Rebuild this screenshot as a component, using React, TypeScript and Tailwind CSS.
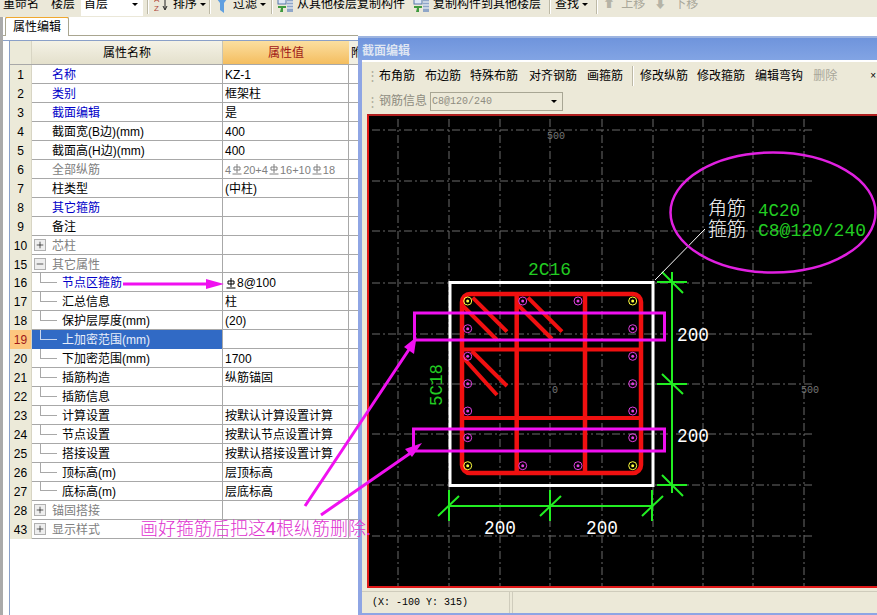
import React from 'react';
import { Plus, Minus } from 'lucide-react';

type Row = {
  no: string;
  name: string;
  value?: React.ReactNode;
  kind?: 'link' | 'muted' | 'child' | 'childLink' | 'group' | 'open' | 'last' | 'selected';
  muted?: boolean;
};

// steel grade mark used by the rebar values
const Bar: React.FC = () => (
  <svg viewBox="0 0 10 11" className="inline-block w-[10px] h-[11px] mx-[1px] align-[-1px]" fill="none" stroke="currentColor" strokeWidth="1">
    <path d="M5 0v9M2 6V3h6v3H2M0.500 10h9" />
  </svg>
);

const ROWS: Row[] = [
  { no: '1', name: '名称', value: 'KZ-1', kind: 'link' },
  { no: '2', name: '类别', value: '框架柱', kind: 'link' },
  { no: '3', name: '截面编辑', value: '是', kind: 'link' },
  { no: '4', name: '截面宽(B边)(mm)', value: '400' },
  { no: '5', name: '截面高(H边)(mm)', value: '400' },
  { no: '6', name: '全部纵筋', kind: 'muted', muted: true, value: <>4<Bar />20+4<Bar />16+10<Bar />18</> },
  { no: '7', name: '柱类型', value: '(中柱)' },
  { no: '8', name: '其它箍筋', kind: 'link' },
  { no: '9', name: '备注' },
  { no: '10', name: '芯柱', kind: 'group' },
  { no: '15', name: '其它属性', kind: 'open' },
  { no: '16', name: '节点区箍筋', kind: 'childLink', value: <><Bar />8@100</> },
  { no: '17', name: '汇总信息', kind: 'child', value: '柱' },
  { no: '18', name: '保护层厚度(mm)', kind: 'child', value: '(20)' },
  { no: '19', name: '上加密范围(mm)', kind: 'selected' },
  { no: '20', name: '下加密范围(mm)', kind: 'child', value: '1700' },
  { no: '21', name: '插筋构造', kind: 'child', value: '纵筋锚固' },
  { no: '22', name: '插筋信息', kind: 'child' },
  { no: '23', name: '计算设置', kind: 'child', value: '按默认计算设置计算' },
  { no: '24', name: '节点设置', kind: 'child', value: '按默认节点设置计算' },
  { no: '25', name: '搭接设置', kind: 'child', value: '按默认搭接设置计算' },
  { no: '26', name: '顶标高(m)', kind: 'child', value: '层顶标高' },
  { no: '27', name: '底标高(m)', kind: 'last', value: '层底标高' },
  { no: '28', name: '锚固搭接', kind: 'group' },
  { no: '43', name: '显示样式', kind: 'group' },
];

const Sep: React.FC<{ className?: string }> = ({ className }) => (
  <span className={`w-[2px] h-[20px] border-l border-[#bdb9a6] bg-white shrink-0 ${className ?? ''}`} />
);

const Caret: React.FC<{ className?: string }> = ({ className }) => (
  <span className={`w-0 h-0 border-x-[3px] border-t-[3px] border-x-transparent border-t-black shrink-0 ${className ?? ''}`} />
);

const CopyIcon: React.FC<{ className?: string }> = ({ className }) => (
  <svg viewBox="0 0 16 18" className={`w-[16px] h-[18px] shrink-0 ${className ?? ''}`}>
    <rect x="1" y="0" width="8" height="9" fill="#dfe7f5" stroke="#5577aa" />
    <rect x="10" y="1" width="6" height="16" fill="#8fa6c8" />
    <path d="M10 4h6M10 7h6M10 10h6M10 13h6" stroke="#fff" />
    <path d="M1 11h8v2h-3v4h-3l1-4h-3z" fill="#3f9a3f" />
  </svg>
);

const TopToolbar: React.FC = () => (
  <div className="h-[17px] bg-[#ebe8d9] overflow-hidden shrink-0">
    <div className="flex items-center h-[8px] text-[12px] text-black whitespace-nowrap">
      <span className="ml-[3px]">重命名</span>
      <span className="ml-[12px]">楼层</span>
      <span className="ml-[6px] w-[62px] h-[24px] bg-white flex items-center pl-[3px] justify-between pr-[5px]">首层<Caret /></span>
      <Sep className="ml-[4px]" />
      <svg viewBox="0 0 14 18" className="w-[14px] h-[18px] ml-[5px] shrink-0">
        <text x="0" y="7" fontSize="8" fill="#b04a3a">A</text>
        <text x="0" y="16" fontSize="8" fill="#b04a3a">Z</text>
        <path d="M11 2v12M9 11l2 4 2-4" stroke="#222" fill="none" />
      </svg>
      <span className="ml-[5px]">排序</span>
      <Caret className="ml-[3px]" />
      <Sep className="ml-[3px]" />
      <svg viewBox="0 0 16 18" className="w-[16px] h-[18px] ml-[3px] shrink-0">
        <path d="M0 0h16l-6 8v10l-4-3V8z" fill="#5f9fe0" />
      </svg>
      <span className="ml-[3px]">过滤</span>
      <Caret className="ml-[3px]" />
      <Sep className="ml-[5px]" />
      <CopyIcon className="ml-[4px]" />
      <span className="ml-[4px]">从其他楼层复制构件</span>
      <CopyIcon className="ml-[8px]" />
      <span className="ml-[4px]">复制构件到其他楼层</span>
      <Sep className="ml-[8px]" />
      <span className="ml-[4px]">查找</span>
      <Caret className="ml-[3px]" />
      <Sep className="ml-[8px]" />
      <span className="ml-[5px] text-[#b5b3a6]">⬆</span>
      <span className="ml-[6px] text-[#a9a799]">上移</span>
      <span className="ml-[9px] text-[#b5b3a6]">⬇</span>
      <span className="ml-[8px] text-[#a9a799]">下移</span>
    </div>
  </div>
);

const NameCell: React.FC<{ row: Row }> = ({ row }) => {
  const k = row.kind;
  const selected = k === 'selected';
  const inTree = k === 'child' || k === 'childLink' || k === 'last' || selected;
  const isGroup = k === 'group' || k === 'open';
  const color = selected
    ? 'text-[#e8eefa]'
    : k === 'link' || k === 'childLink'
      ? 'text-[#0000c8]'
      : k === 'muted' || isGroup
        ? 'text-[#808080]'
        : 'text-black';
  return (
    <div className={`flex items-center border-r border-[#a8a8a8] overflow-hidden whitespace-nowrap ${color} ${selected ? 'bg-[#316ac5]' : ''}`}>
      {inTree && (
        <div className={`ml-[8px] w-[22px] shrink-0 flex ${k === 'last' ? 'h-1/2 self-start' : 'h-full'}`}>
          <div className={`w-[17px] border-l ${selected ? 'border-[#c9d6ee]' : 'border-[#a8a8a8]'} ${k === 'last' ? 'h-full border-b' : 'h-1/2 border-b'}`} />
        </div>
      )}
      {isGroup && (
        <span className="ml-[2px] mr-[6px] w-[12px] h-[12px] border border-[#b0b0b0] bg-[#eeeeee] flex items-center justify-center text-black shrink-0">
          {k === 'open' ? <Minus size={10} strokeWidth={1.5} /> : <Plus size={10} strokeWidth={1.5} />}
        </span>
      )}
      {!inTree && !isGroup && <span className="w-[20px] shrink-0" />}
      <span className="pt-px">{row.name}</span>
    </div>
  );
};

const PropertyTable: React.FC = () => (
  <div className="w-[349px] ml-[10px]">
    <div className="grid grid-cols-[22px_191px_126px_10px] h-[24px] border-b border-[#a8a8a8] text-[12px] overflow-hidden">
      <div className="bg-[#ecead9] border-r border-[#d8d5c4]" />
      <div className="bg-gradient-to-b from-[#f4f2e6] to-[#e4e0cc] flex items-center justify-center border-r border-[#c8c5b4]">属性名称</div>
      <div className="bg-gradient-to-b from-[#fbdf9f] to-[#f4bd5e] flex items-center justify-center text-[#a01818]">属性值</div>
      <div className="bg-[#f1efe2] pl-[2px] flex items-center whitespace-nowrap overflow-hidden">附</div>
    </div>
    {ROWS.map(row => (
      <div key={row.no} className="grid grid-cols-[22px_191px_126px_10px] h-[18.96px] border-b border-[#a8a8a8] text-[12px]">
        <div className={`flex items-center justify-center pt-px border-r border-[#d8d5c4] ${row.kind === 'selected' ? 'bg-[#fdc77f] text-[#a01818]' : 'bg-[#ecead9]'}`}>{row.no}</div>
        <NameCell row={row} />
        <div className={`flex items-center pl-[2px] pt-px border-r border-[#a8a8a8] whitespace-nowrap overflow-hidden ${row.muted ? 'text-[#808080] text-[11px]' : ''}`}>{row.value}</div>
        <div />
      </div>
    ))}
  </div>
);

const GRID_X = [398, 449, 500, 550, 602, 653, 703, 753, 804];
const GRID_Y = [129, 180, 230, 282, 333, 383, 433, 484, 535];
const SIDE_Y = [327.700, 355.300, 382.700, 410, 436.700];

const Rebar: React.FC<{ x: number; y: number; corner?: boolean }> = ({ x, y, corner }) => (
  <g>
    <circle cx={x} cy={y} r={4} fill="none" stroke={corner ? '#ffff40' : '#e040e0'} strokeWidth="1" />
    <circle cx={x} cy={y} r={1.500} fill={corner ? '#ffff40' : '#e040e0'} />
  </g>
);

const Drawing: React.FC = () => (
  <svg viewBox="369 115 508 470" className="block w-[508px] h-[470px]">
    <rect x="369" y="115" width="508" height="470" fill="#000" />
    <g stroke="#6a6a6a" strokeWidth="1" strokeDasharray="8 3 2 3">
      {GRID_X.map(x => <line key={x} x1={x} y1="118" x2={x} y2="585" />)}
      {GRID_Y.map(y => <line key={y} x1="372" y1={y} x2="813" y2={y} />)}
    </g>
    <g fill="#777" fontSize="10" fontFamily="'Liberation Mono', monospace">
      <text x="547" y="138">500</text>
      <text x="801" y="392">500</text>
      <text x="552" y="392">0</text>
    </g>

    {/* column outline */}
    <rect x="450" y="281.500" width="203" height="203" fill="none" stroke="#fff" strokeWidth="3" />

    {/* stirrups */}
    <g stroke="#f01010" fill="none" strokeLinecap="butt">
      <rect x="462" y="293" width="179" height="179" rx="8" strokeWidth="4.500" />
      <path d="M516.700 293v179M585 293v179" strokeWidth="4.500" />
      <path d="M462 348.500h179M462 417h179" strokeWidth="4" />
      <path d="M472.700 296.700L507 330.700M463 305L497 339M528 296.700L562 330.700M517 303L552 338M471.700 350L507 385M461.700 355L497 394" strokeWidth="4" />
    </g>

    {[467.700, 632.700].map(x => [300, 464.700].map(y => <Rebar key={`${x}-${y}`} x={x} y={y} corner />))}
    {[522.700, 578].map(x => [300, 464.700].map(y => <Rebar key={`${x}-${y}`} x={x} y={y} />))}
    {[467.700, 632.700].map(x => SIDE_Y.map(y => <Rebar key={`${x}-${y}`} x={x} y={y} />))}

    {/* dimensions */}
    <g stroke="#22ee22" strokeWidth="2" fill="none">
      <path d="M672 271V492M657 281h30M657 383h30M657 484h30M662 271l21 21M662 373l21 20M662 474l21 21" />
      <path d="M449 505H652M449 489v31M550 489v31M652 489v31M438 515l21-20M540 515l21-20M642 515l21-20" />
    </g>
    <line x1="705" y1="228" x2="655" y2="279" stroke="#fff" strokeWidth="1" />

    <g fontFamily="'Liberation Mono', monospace" fill="#fff" fontSize="20">
      <text x="677" y="340" textLength="32" lengthAdjust="spacingAndGlyphs">200</text>
      <text x="677" y="441" textLength="32" lengthAdjust="spacingAndGlyphs">200</text>
      <text x="484" y="533" textLength="32" lengthAdjust="spacingAndGlyphs">200</text>
      <text x="586" y="533" textLength="32" lengthAdjust="spacingAndGlyphs">200</text>
    </g>
    <g fontFamily="'Liberation Mono', monospace" fill="#22cc22" fontSize="18">
      <text x="528" y="274" textLength="43" lengthAdjust="spacingAndGlyphs">2C16</text>
      <text x="0" y="0" transform="translate(442 405) rotate(-90)" textLength="42" lengthAdjust="spacingAndGlyphs">5C18</text>
      <text x="758" y="215" textLength="42" lengthAdjust="spacingAndGlyphs">4C20</text>
      <text x="758" y="235" textLength="108" lengthAdjust="spacingAndGlyphs">C8@120/240</text>
    </g>
    <g fontFamily="'Noto Sans CJK SC', sans-serif" fill="#fff" fontSize="19" fontWeight="300">
      <text x="708" y="214">角筋</text>
      <text x="708" y="235">箍筋</text>
    </g>
  </svg>
);

const DrawingDialog: React.FC = () => (
  <div className="mt-[19px] w-[519px] flex flex-col border-t-2 border-[#9db4e0] bg-[#8ea5e4] pb-[2px]">
    <div className="h-[22px] bg-gradient-to-b from-[#6f94dc] to-[#82a4e4] flex items-center pl-[4px] pt-[3px] text-[12px] font-bold text-[#dfe6f2]">截面编辑</div>
    <div className="flex-1 ml-[4px] bg-[#ece9d8] border-t-2 border-white flex flex-col">
      <div className="h-[27px] flex items-center text-[12px] whitespace-nowrap relative">
        <span className="ml-[4px] text-[#b0ad9c] text-[13px] leading-none w-[12px]">⋮</span>
        <span className="ml-[1px]">布角筋</span>
        <span className="ml-[10px]">布边筋</span>
        <span className="ml-[9px]">特殊布筋</span>
        <span className="ml-[11px]">对齐钢筋</span>
        <span className="ml-[10px]">画箍筋</span>
        <Sep className="ml-[9px] h-[14px]" />
        <span className="ml-[6px]">修改纵筋</span>
        <span className="ml-[9px]">修改箍筋</span>
        <span className="ml-[10px]">编辑弯钩</span>
        <span className="ml-[10px] text-[#a8a699]">删除</span>
        <span className="ml-auto mr-[1px] text-[10px]">×</span>
      </div>
      <div className="h-[24px] flex items-center text-[12px] text-[#8e8c80] whitespace-nowrap">
        <span className="ml-[4px] text-[#b0ad9c] text-[13px] leading-none w-[12px]">⋮</span>
        <span className="ml-[1px]">钢筋信息</span>
        <span className="ml-[3px] w-[133px] h-[19px] border border-[#a8a694] flex items-center justify-between pl-[1px] pr-[5px] text-[10px] font-['Liberation_Mono',monospace]">
          C8@120/240
          <Caret className="border-t-[#8e8c80]" />
        </span>
      </div>
      <div className="ml-[5px] mt-[1px] border-y-2 border-l-2 border-t-[#b02020] border-b-[#e01818] border-l-[#e01818] h-[474px]">
        <Drawing />
      </div>
      <div className="flex-1 mt-[3px] border-t border-[#cfccbc] flex items-center text-[10px] font-['Liberation_Mono',monospace]">
        <span className="ml-[10px] w-[137px] whitespace-nowrap">(X: -100 Y: 315)</span>
        <span className="w-[4px] h-full border-x border-[#cfccbc]" />
      </div>
    </div>
  </div>
);

// hand-drawn notes on top of the screenshot
const Annotations: React.FC = () => (
  <>
    <svg viewBox="0 0 877 615" className="absolute inset-0 w-[877px] h-[615px] pointer-events-none">
      <g fill="none" stroke="#f010f0">
        <ellipse cx="773" cy="212.500" rx="102.500" ry="60" strokeWidth="2.500" stroke="#e020e0" />
        <rect x="414.500" y="313" width="250" height="27" strokeWidth="3" />
        <rect x="413.500" y="429" width="251" height="22" strokeWidth="3" />
        <path d="M305 506L412 345M321 515L412 452M123 284H208" strokeWidth="3" />
      </g>
      <g fill="#f010f0">
        <path d="M416.500 337L404 347L414 354Z" />
        <path d="M422 443L405 449L412 457Z" />
        <path d="M224 284L206 279V289Z" />
      </g>
    </svg>
    <div className="absolute left-[140px] top-[519px] text-[18px] leading-[20px] font-light text-[#e030d0] whitespace-nowrap">画好箍筋后把这4根纵筋删除.</div>
  </>
);

const App: React.FC = () => (
  <div className="relative w-[877px] h-[615px] overflow-hidden bg-white flex flex-col text-black font-['Liberation_Sans','Noto_Sans_CJK_SC',sans-serif]">
    <TopToolbar />
    <div className="flex flex-1 min-h-0">
      <div className="w-[358px] shrink-0 flex flex-col border-l-[3px] border-[#aaaaaa] overflow-hidden">
        <div className="h-[19px] flex items-end border-b border-[#a9a690] shrink-0 -ml-[3px] pl-[5px]">
          <div className="w-[64px] h-[20px] -mb-px bg-white border border-b-0 border-[#a9a690] border-t-2 border-t-[#f0a830] rounded-t-[3px] text-[12px] flex items-center justify-center z-10">属性编辑</div>
        </div>
        <div className="flex-1 -ml-[3px] mt-[4px] border-t border-[#8aa0c8]">
          <div className="h-full border-l border-[#8aa0c8] ml-[9px] -mr-px [&>div]:ml-0">
            <PropertyTable />
          </div>
        </div>
      </div>
      <DrawingDialog />
    </div>
    <Annotations />
  </div>
);

export default App;
